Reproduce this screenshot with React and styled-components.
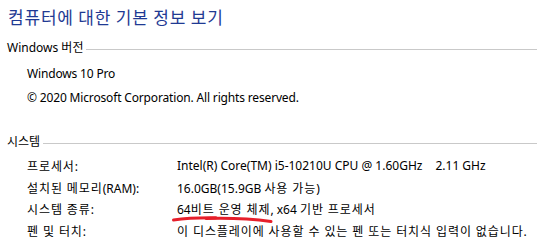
import React from "react";
import styled, { createGlobalStyle } from "styled-components";

const Global = createGlobalStyle`
  html, body { margin: 0; padding: 0; background: #fff; }
  body {
    font-family: "Noto Sans", "Noto Sans CJK KR", sans-serif;
    font-size: 12px;
    color: #000;
  }
`;

const Page = styled.div`
  width: 537px;
  height: 251px;
  overflow: hidden;
  padding: 6px 0 0 8px;
  box-sizing: border-box;
`;

const Title = styled.h1`
  margin: 0;
  font-family: "Noto Sans CJK KR", sans-serif;
  font-weight: 400;
  font-size: 17px;
  line-height: 22px;
  letter-spacing: 0.8px;
  color: #1f3a93;
`;

const Section = styled.section`
  margin-top: ${(p) => p.$top}px;
`;

const SectionHeader = styled.div`
  display: flex;
  align-items: center;
  gap: 3px;
  margin-left: -1px;
  height: 16px;
`;

const SectionLabel = styled.span`
  line-height: 16px;
  white-space: nowrap;
`;

const Rule = styled.div`
  flex: 1;
  height: 0;
  border-top: 1px solid #c9c9c9;
  margin-top: 3px;
`;

const Indent = styled.div`
  padding-left: 19px;
  margin-top: ${(p) => p.$top}px;
`;

const Line = styled.div`
  line-height: 24px;
  letter-spacing: -0.16px;
  white-space: nowrap;
`;

const Grid = styled.div`
  display: grid;
  grid-template-columns: 150px auto;
  grid-auto-rows: 21.7px;
  align-items: center;
  padding-left: 19px;
  margin-top: ${(p) => p.$top}px;
`;

const Cell = styled.div`
  white-space: nowrap;
`;

const Ko = styled.span`
  letter-spacing: 0.9px;
`;

const Marked = styled.span`
  position: relative;
`;

const Scribble = styled.svg`
  position: absolute;
  left: -5px;
  top: 13px;
  width: 102px;
  height: 8px;
  overflow: visible;
  pointer-events: none;
`;

const Gap = styled.span`
  display: inline-block;
  width: 13px;
`;

export default function App() {
  return (
    <>
      <Global />
      <Page>
        <Title>컴퓨터에 대한 기본 정보 보기</Title>
        <Section $top={12}>
          <SectionHeader>
            <SectionLabel>Windows 버전</SectionLabel>
            <Rule />
          </SectionHeader>
          <Indent $top={6}>
            <Line>Windows 10 Pro</Line>
            <Line>© 2020 Microsoft Corporation. All rights reserved.</Line>
          </Indent>
        </Section>
        <Section $top={24}>
          <SectionHeader>
            <SectionLabel>시스템</SectionLabel>
            <Rule />
          </SectionHeader>
          <Grid $top={5}>
            <Cell>
              <Ko>프로세서</Ko>:
            </Cell>
            <Cell>
              Intel(R) Core(TM) i5-10210U CPU @ 1.60GHz<Gap />2.11 GHz
            </Cell>
            <Cell>
              <Ko>설치된 메모리</Ko>(RAM):
            </Cell>
            <Cell>
              16.0GB(15.9GB <Ko>사용 가능</Ko>)
            </Cell>
            <Cell>
              <Ko>시스템 종류</Ko>:
            </Cell>
            <Cell>
              <Marked>
                64<Ko>비트 운영 체제</Ko>
                <Scribble viewBox="0 0 102 8">
                  <path
                    d="M1.5 6 Q 18 3.5, 44 3.8"
                    stroke="#e61f2b"
                    strokeWidth="3"
                    strokeLinecap="round"
                    fill="none"
                  />
                  <path
                    d="M34 4.5 Q 70 3.5, 99 7.5"
                    stroke="#e61f2b"
                    strokeWidth="3"
                    strokeLinecap="round"
                    fill="none"
                  />
                </Scribble>
              </Marked>
              , x64 <Ko>기반 프로세서</Ko>
            </Cell>
            <Cell>
              <Ko>펜 및 터치</Ko>:
            </Cell>
            <Cell>
              <Ko>이 디스플레이에 사용할 수 있는 펜 또는 터치식 입력이 없습니다.</Ko>
            </Cell>
          </Grid>
        </Section>
      </Page>
    </>
  );
}
